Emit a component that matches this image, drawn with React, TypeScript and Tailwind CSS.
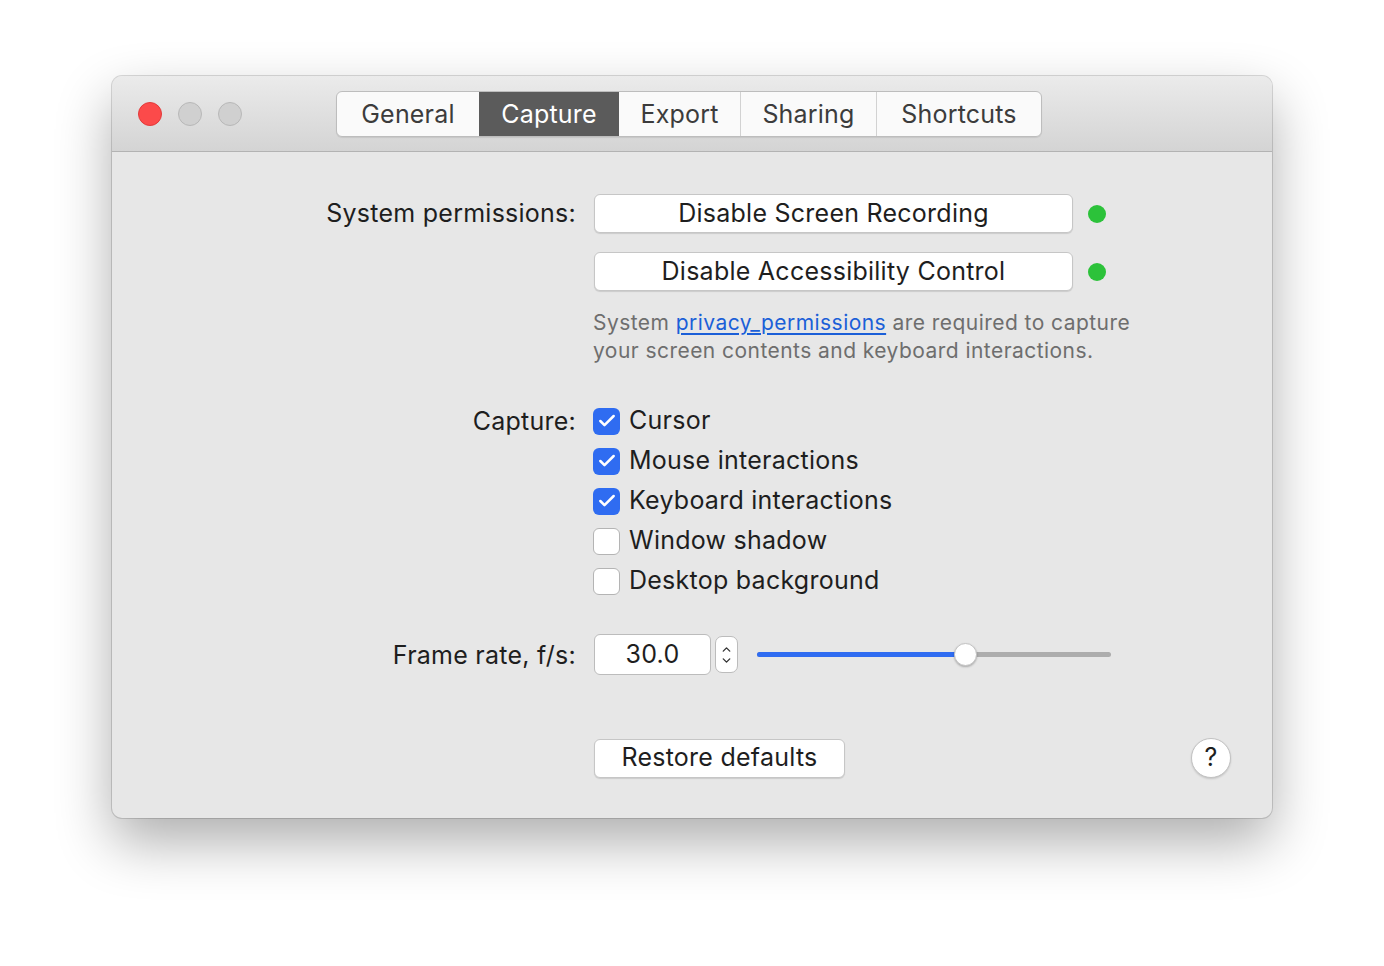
import { Check, ChevronUp, ChevronDown } from "lucide-react";

const tabs = ["General", "Capture", "Export", "Sharing", "Shortcuts"];
const tabWidths = ["w-[142px]", "w-[140px]", "w-[121px]", "w-[136px]", "w-[165px]"];

const options = [
  { label: "Cursor", checked: true },
  { label: "Mouse interactions", checked: true },
  { label: "Keyboard interactions", checked: true },
  { label: "Window shadow", checked: false },
  { label: "Desktop background", checked: false },
];

function MacButton({ children, className }: { children: React.ReactNode; className?: string }) {
  return (
    <button
      className={
        "flex items-center justify-center rounded-[6px] bg-white text-[25px] tracking-[0.25px] text-[#1e1e1e] border border-[#c6c6c6] shadow-[0_1px_1px_rgba(0,0,0,0.12)] " +
        (className ?? "")
      }
    >
      {children}
    </button>
  );
}

export default function App() {
  return (
    <div
      className="min-h-[966px] bg-white pt-[76px] pl-[112px]"
      style={{ fontFamily: "Inter, 'Open Sans', sans-serif" }}
    >
      <div className="w-[1160px] h-[742px] rounded-[10px] overflow-hidden bg-[#e7e7e7] shadow-[0_24px_55px_rgba(0,0,0,0.32),0_0_0_1px_rgba(0,0,0,0.14)] flex flex-col">
        {/* Title bar */}
        <div className="h-[76px] shrink-0 flex items-center bg-gradient-to-b from-[#ebebeb] to-[#d4d4d4] border-b border-[#b3b3b3]">
          <div className="flex items-center gap-[16px] pl-[26px]">
            <span className="w-[24px] h-[24px] rounded-full bg-[#fc4a4a] border border-[#e23a3a]" />
            <span className="w-[24px] h-[24px] rounded-full bg-[#d0d0d0] border border-[#b8b8b8]" />
            <span className="w-[24px] h-[24px] rounded-full bg-[#d0d0d0] border border-[#b8b8b8]" />
          </div>
          <div className="ml-[94px] flex h-[46px] rounded-[6px] border border-[#bdbdbd] bg-[#fafafa] overflow-hidden shadow-[0_1px_1px_rgba(0,0,0,0.08)]">
            {tabs.map((t, i) => (
              <div
                key={t}
                className={
                  "flex items-center justify-center pt-[2px] text-[25px] tracking-[0.2px] " +
                  tabWidths[i] +
                  (i === 1 ? " bg-[#5b5b5b] text-white" : " text-[#3c3c3c]") +
                  (i > 2 ? " border-l border-[#d2d2d2]" : "")
                }
              >
                {t}
              </div>
            ))}
          </div>
        </div>

        {/* Content */}
        <div className="flex-1 flex flex-col pt-[42px] text-[#1e1e1e] tracking-[0.25px]">
          {/* Permissions */}
          <div className="flex">
            <div className="w-[464px] shrink-0 text-right text-[25px] leading-[38px]">System permissions:</div>
            <div className="ml-[18px] flex flex-col">
              <div className="flex items-center">
                <MacButton className="w-[479px] h-[39px]">Disable Screen Recording</MacButton>
                <span className="ml-[15px] w-[18px] h-[18px] rounded-full bg-[#2cc23a]" />
              </div>
              <div className="flex items-center mt-[19px]">
                <MacButton className="w-[479px] h-[39px]">Disable Accessibility Control</MacButton>
                <span className="ml-[15px] w-[18px] h-[18px] rounded-full bg-[#2cc23a]" />
              </div>
              <p className="mt-[18px] -ml-[1px] text-[21px] leading-[28px] text-[#6e6e6e] tracking-[0.45px]">
                System{" "}
                <a className="text-[#1b5fd8] underline underline-offset-[3px]">privacy_permissions</a> are
                required to capture
                <br />
                your screen contents and keyboard interactions.
              </p>
            </div>
          </div>

          {/* Capture */}
          <div className="flex mt-[36px]">
            <div className="w-[464px] shrink-0 text-right text-[25px] leading-[40px]">Capture:</div>
            <div className="ml-[17px] flex flex-col">
              {options.map((o) => (
                <div key={o.label} className="flex items-center h-[40px]">
                  {o.checked ? (
                    <span className="w-[27px] h-[27px] rounded-[6px] bg-[#2f6cf1] flex items-center justify-center">
                      <Check className="text-white" size={20} strokeWidth={3} />
                    </span>
                  ) : (
                    <span className="w-[27px] h-[27px] rounded-[6px] bg-white border border-[#b4b4b4]" />
                  )}
                  <span className="ml-[9px] text-[25px]">{o.label}</span>
                </div>
              ))}
            </div>
          </div>

          {/* Frame rate */}
          <div className="flex items-center mt-[33px]">
            <div className="w-[464px] shrink-0 text-right text-[25px] leading-[40px]">Frame rate, f/s:</div>
            <div className="ml-[18px] flex items-center">
              <div className="w-[117px] h-[41px] rounded-[6px] bg-white border border-[#bcbcbc] flex items-center justify-center text-[25px]">
                30.0
              </div>
              <div className="ml-[4px] w-[23px] h-[37px] rounded-[7px] bg-white border border-[#bcbcbc] flex flex-col items-center justify-center">
                <ChevronUp size={13} strokeWidth={2.5} className="text-[#333] -mb-[2px]" />
                <ChevronDown size={13} strokeWidth={2.5} className="text-[#333]" />
              </div>
              <div className="ml-[19px] w-[354px] h-[5px] rounded-full bg-[#adadad] relative">
                <div className="absolute left-0 top-0 h-[5px] w-[208px] rounded-full bg-[#2f6cf1]" />
                <div className="absolute left-[197px] top-[-9px] w-[23px] h-[23px] rounded-full bg-white border border-[#c4c4c4] shadow-[0_1px_2px_rgba(0,0,0,0.25)]" />
              </div>
            </div>
          </div>

          {/* Footer */}
          <div className="flex items-center mt-[63px]">
            <MacButton className="ml-[482px] w-[251px] h-[39px]">Restore defaults</MacButton>
            <div className="ml-auto mr-[41px] w-[40px] h-[40px] rounded-full bg-white border border-[#c2c2c2] shadow-[0_1px_2px_rgba(0,0,0,0.15)] flex items-center justify-center text-[25px] text-[#1e1e1e]">
              ?
            </div>
          </div>
        </div>
      </div>
    </div>
  );
}
